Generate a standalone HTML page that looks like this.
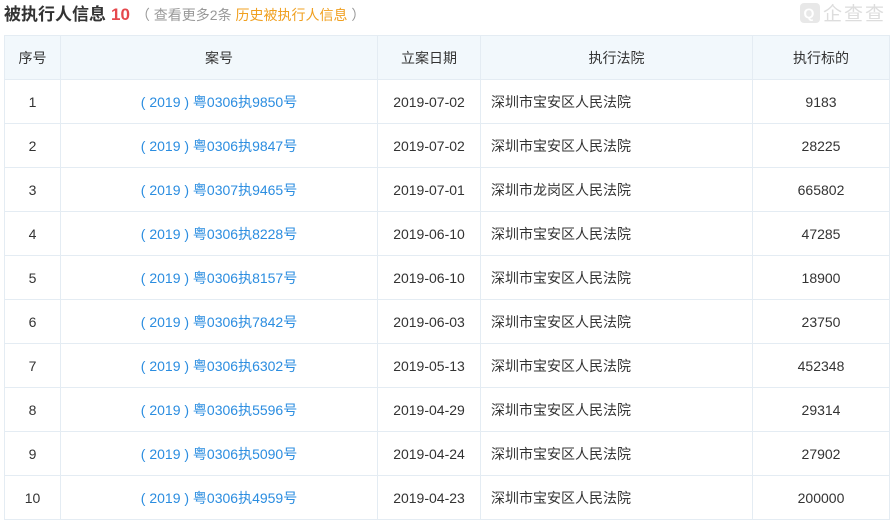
<!DOCTYPE html>
<html><head><meta charset="utf-8"><style>
body{margin:0;width:893px;height:520px;background:#fff;font-family:"Liberation Sans","Noto Sans CJK SC",sans-serif;overflow:hidden;position:relative}
.title{position:absolute;left:4px;top:0px;font-size:17px;font-weight:bold;color:#333;white-space:nowrap}
.title .n{color:#e5484d;margin-left:5px}
.title .s{font-weight:normal;font-size:14px;color:#999;margin-left:6px}
.title .o{color:#f0a020}
.logo{position:absolute;left:800px;top:-1px;font-size:19px;color:#ddd;letter-spacing:2px}
.logo b{display:inline-block;width:20px;height:20px;border-radius:4px;background:#e8e8e8;color:#fff;font-size:14px;text-align:center;line-height:20px;vertical-align:2px;margin-right:3px}
table{position:absolute;left:4px;top:35px;border-collapse:collapse;font-size:14px;color:#333}
td,th{border:1px solid #e4ecf3;height:43px;padding:0;text-align:center;font-weight:normal}
th{background:#f2f8fc}
td.l{text-align:left;padding-left:10px}
a{color:#2b8de0;text-decoration:none;white-space:pre}
</style></head><body>
<div class="title">被执行人信息<span class="n">10</span><span class="s">（ 查看更多2条 <span class="o">历史被执行人信息</span> ）</span></div>
<div class="logo"><b>Q</b>企查查</div>
<table>
<tr><th style="width:55px">序号</th><th style="width:316px">案号</th><th style="width:102px">立案日期</th><th style="width:271px">执行法院</th><th style="width:136px">执行标的</th></tr>
<tr><td>1</td><td><a>( 2019 ) 粤0306执9850号</a></td><td>2019-07-02</td><td class="l">深圳市宝安区人民法院</td><td>9183</td></tr>
<tr><td>2</td><td><a>( 2019 ) 粤0306执9847号</a></td><td>2019-07-02</td><td class="l">深圳市宝安区人民法院</td><td>28225</td></tr>
<tr><td>3</td><td><a>( 2019 ) 粤0307执9465号</a></td><td>2019-07-01</td><td class="l">深圳市龙岗区人民法院</td><td>665802</td></tr>
<tr><td>4</td><td><a>( 2019 ) 粤0306执8228号</a></td><td>2019-06-10</td><td class="l">深圳市宝安区人民法院</td><td>47285</td></tr>
<tr><td>5</td><td><a>( 2019 ) 粤0306执8157号</a></td><td>2019-06-10</td><td class="l">深圳市宝安区人民法院</td><td>18900</td></tr>
<tr><td>6</td><td><a>( 2019 ) 粤0306执7842号</a></td><td>2019-06-03</td><td class="l">深圳市宝安区人民法院</td><td>23750</td></tr>
<tr><td>7</td><td><a>( 2019 ) 粤0306执6302号</a></td><td>2019-05-13</td><td class="l">深圳市宝安区人民法院</td><td>452348</td></tr>
<tr><td>8</td><td><a>( 2019 ) 粤0306执5596号</a></td><td>2019-04-29</td><td class="l">深圳市宝安区人民法院</td><td>29314</td></tr>
<tr><td>9</td><td><a>( 2019 ) 粤0306执5090号</a></td><td>2019-04-24</td><td class="l">深圳市宝安区人民法院</td><td>27902</td></tr>
<tr><td>10</td><td><a>( 2019 ) 粤0306执4959号</a></td><td>2019-04-23</td><td class="l">深圳市宝安区人民法院</td><td>200000</td></tr>
</table>
</body></html>
